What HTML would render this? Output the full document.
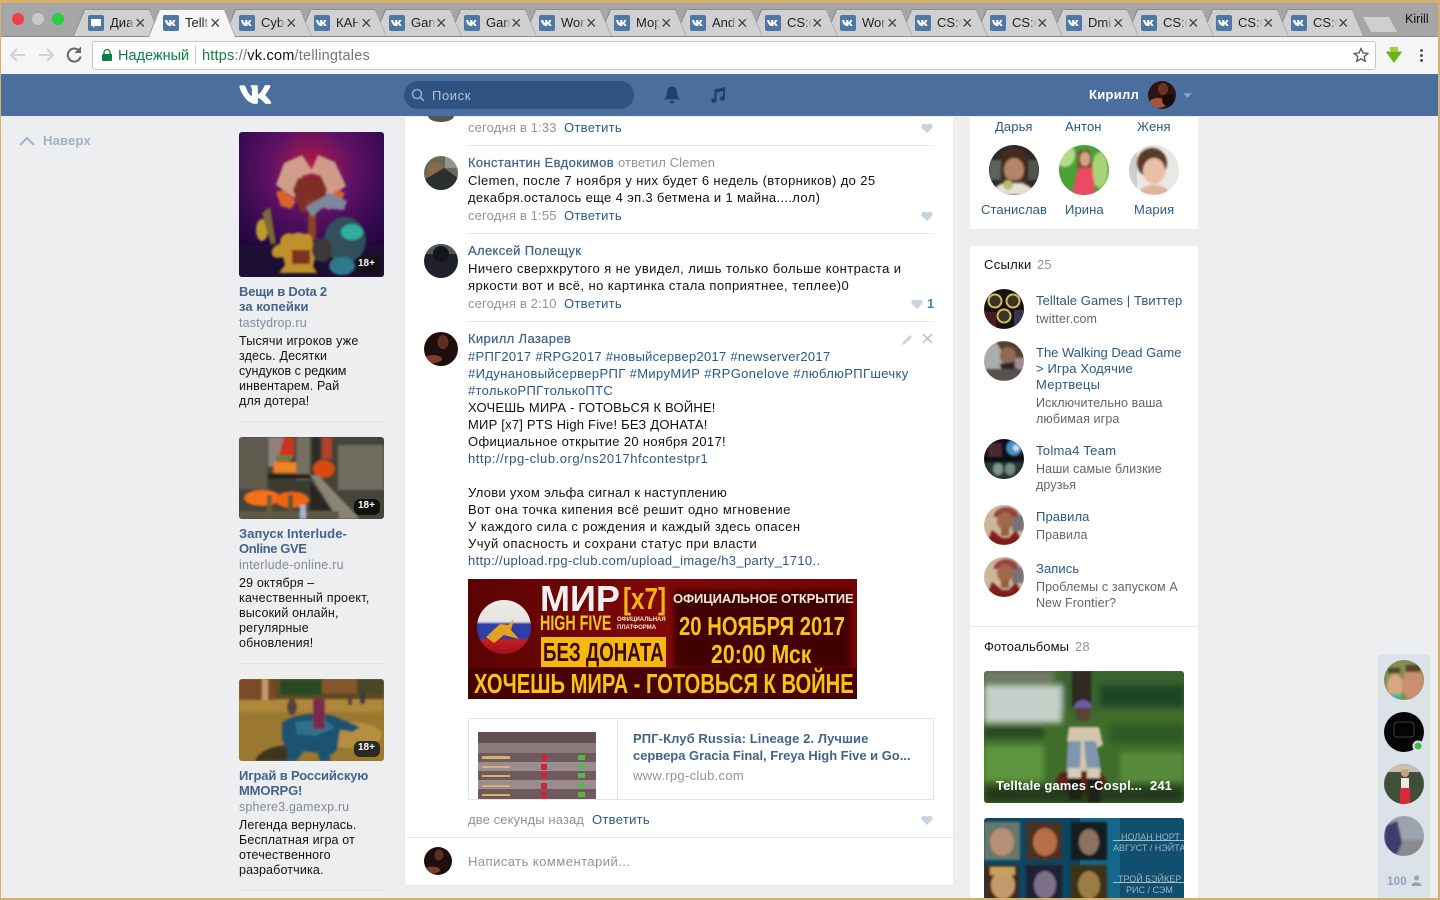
<!DOCTYPE html>
<html lang="ru"><head><meta charset="utf-8"><title>Telltale</title>
<style>
html,body{margin:0;padding:0;width:1440px;height:900px;overflow:hidden;background:#edeef0}
body{position:relative;font-family:"Liberation Sans","Noto Sans CJK SC",sans-serif;font-size:13px;color:#000}
.a{position:absolute}
.t{position:absolute;white-space:nowrap;line-height:16px;font-size:13px;letter-spacing:.3px;z-index:3;color:#111}
.l{color:#2a5885}.g{color:#939393}.m{color:#656565;font-size:12.500px;letter-spacing:.12px}.b{font-weight:bold;color:#42648b;letter-spacing:.25px}
.n{color:#42648b;-webkit-text-stroke:.25px #42648b;letter-spacing:.35px}
.ab{font-size:12.500px;letter-spacing:.15px}
.card{position:absolute;background:#fff;box-shadow:inset 0 0 0 1px #e9eaed}
.hr{position:absolute;height:1px;background:#e7e8ec;z-index:2}
.tab{position:absolute;top:9px;width:88px;height:28px;background:#8e8e8e;clip-path:polygon(0 100%,11px 0,76px 0,100% 100%)}
.tab:before{content:"";position:absolute;left:1px;top:1px;right:1px;bottom:1px;background:#d0d0d0;clip-path:polygon(0 100%,11px 0,75px 0,100% 100%)}
.tab.on{background:#a0a0a0;height:28px}.tab.on:before{background:#f5f5f5;bottom:0}
.fv{position:absolute;left:15px;top:6px;width:16px;height:16px;border-radius:2px;background:#4f77a6}
.fv svg{display:block}
.tt{position:absolute;left:37px;top:6px;width:25px;overflow:hidden;font-size:13px;line-height:16px;white-space:nowrap;color:#222;-webkit-mask-image:linear-gradient(90deg,#000 72%,transparent 96%);mask-image:linear-gradient(90deg,#000 72%,transparent 96%)}
.x{position:absolute;left:62px;top:5px;font-size:18px;line-height:18px;color:#444}
</style></head><body>

<!-- chrome -->
<div class="a" style="left:0;top:0;width:1440px;height:37px;background:#a6a6a6"></div>
<div class="a" style="left:0;top:37px;width:1440px;height:37px;background:#f5f5f5"></div>
<div class="a" style="left:0;top:0;width:1440px;height:3px;background:#d5b26c;z-index:9"></div>
<div class="a" style="left:0;top:0;width:1px;height:900px;background:#d5b26c;z-index:9"></div>
<div class="a" style="left:1438px;top:0;width:2px;height:900px;background:#d5b26c;z-index:9"></div>
<div class="a" style="left:0;top:898px;width:1440px;height:2px;background:#d5b26c;z-index:9"></div>
<div class="a" style="left:12px;top:13px;width:12px;height:12px;border-radius:50%;background:#f0404a"></div>
<div class="a" style="left:32px;top:13px;width:12px;height:12px;border-radius:50%;background:#c9c9c9"></div>
<div class="a" style="left:52px;top:13px;width:12px;height:12px;border-radius:50%;background:#28cd41"></div>

<div class="tab" style="left:1276px"><div class="fv"><svg width="16" height="16"><path fill="#fff" d="M2 5h2.200c.5 2 1.500 3.200 2 3.200V5h2.200v2.600c.7-.3 1.500-1.500 1.800-2.600h2.200c-.3 1.200-1.300 2.500-2 3.100.8.600 1.900 1.700 2.300 2.900h-2.300c-.4-1-1.200-1.800-2-2V11H7C4.500 11 2.500 8.500 2 5z"/></svg></div><div class="tt">CS:GO</div><div class="x">×</div></div>
<div class="tab" style="left:1201px"><div class="fv"><svg width="16" height="16"><path fill="#fff" d="M2 5h2.200c.5 2 1.500 3.200 2 3.200V5h2.200v2.600c.7-.3 1.500-1.500 1.800-2.600h2.200c-.3 1.200-1.300 2.500-2 3.100.8.600 1.900 1.700 2.300 2.900h-2.300c-.4-1-1.200-1.800-2-2V11H7C4.500 11 2.500 8.500 2 5z"/></svg></div><div class="tt">CS:GO</div><div class="x">×</div></div>
<div class="tab" style="left:1126px"><div class="fv"><svg width="16" height="16"><path fill="#fff" d="M2 5h2.200c.5 2 1.500 3.200 2 3.200V5h2.200v2.600c.7-.3 1.500-1.500 1.800-2.600h2.200c-.3 1.200-1.300 2.500-2 3.100.8.600 1.900 1.700 2.300 2.900h-2.300c-.4-1-1.200-1.800-2-2V11H7C4.500 11 2.500 8.500 2 5z"/></svg></div><div class="tt">CS:GO</div><div class="x">×</div></div>
<div class="tab" style="left:1051px"><div class="fv"><svg width="16" height="16"><path fill="#fff" d="M2 5h2.200c.5 2 1.500 3.200 2 3.200V5h2.200v2.600c.7-.3 1.500-1.500 1.800-2.600h2.200c-.3 1.200-1.300 2.500-2 3.100.8.600 1.900 1.700 2.300 2.900h-2.300c-.4-1-1.200-1.800-2-2V11H7C4.500 11 2.500 8.500 2 5z"/></svg></div><div class="tt">Dmi</div><div class="x">×</div></div>
<div class="tab" style="left:975px"><div class="fv"><svg width="16" height="16"><path fill="#fff" d="M2 5h2.200c.5 2 1.500 3.200 2 3.200V5h2.200v2.600c.7-.3 1.500-1.500 1.800-2.600h2.200c-.3 1.200-1.300 2.500-2 3.100.8.600 1.900 1.700 2.300 2.900h-2.300c-.4-1-1.200-1.800-2-2V11H7C4.500 11 2.500 8.500 2 5z"/></svg></div><div class="tt">CS:GO</div><div class="x">×</div></div>
<div class="tab" style="left:900px"><div class="fv"><svg width="16" height="16"><path fill="#fff" d="M2 5h2.200c.5 2 1.500 3.200 2 3.200V5h2.200v2.600c.7-.3 1.500-1.500 1.800-2.600h2.200c-.3 1.200-1.300 2.500-2 3.100.8.600 1.900 1.700 2.300 2.900h-2.300c-.4-1-1.200-1.800-2-2V11H7C4.500 11 2.500 8.500 2 5z"/></svg></div><div class="tt">CS:GO</div><div class="x">×</div></div>
<div class="tab" style="left:825px"><div class="fv"><svg width="16" height="16"><path fill="#fff" d="M2 5h2.200c.5 2 1.500 3.200 2 3.200V5h2.200v2.600c.7-.3 1.500-1.500 1.800-2.600h2.200c-.3 1.200-1.300 2.500-2 3.100.8.600 1.900 1.700 2.300 2.900h-2.300c-.4-1-1.200-1.800-2-2V11H7C4.500 11 2.500 8.500 2 5z"/></svg></div><div class="tt">Wor</div><div class="x">×</div></div>
<div class="tab" style="left:750px"><div class="fv"><svg width="16" height="16"><path fill="#fff" d="M2 5h2.200c.5 2 1.500 3.200 2 3.200V5h2.200v2.600c.7-.3 1.500-1.500 1.800-2.600h2.200c-.3 1.200-1.300 2.500-2 3.100.8.600 1.900 1.700 2.300 2.900h-2.300c-.4-1-1.200-1.800-2-2V11H7C4.500 11 2.500 8.500 2 5z"/></svg></div><div class="tt">CS:GO</div><div class="x">×</div></div>
<div class="tab" style="left:675px"><div class="fv"><svg width="16" height="16"><path fill="#fff" d="M2 5h2.200c.5 2 1.500 3.200 2 3.200V5h2.200v2.600c.7-.3 1.500-1.500 1.800-2.600h2.200c-.3 1.200-1.300 2.500-2 3.100.8.600 1.900 1.700 2.300 2.900h-2.300c-.4-1-1.200-1.800-2-2V11H7C4.500 11 2.500 8.500 2 5z"/></svg></div><div class="tt">And</div><div class="x">×</div></div>
<div class="tab" style="left:599px"><div class="fv"><svg width="16" height="16"><path fill="#fff" d="M2 5h2.200c.5 2 1.500 3.200 2 3.200V5h2.200v2.600c.7-.3 1.500-1.500 1.800-2.600h2.200c-.3 1.200-1.300 2.500-2 3.100.8.600 1.900 1.700 2.300 2.900h-2.300c-.4-1-1.200-1.800-2-2V11H7C4.500 11 2.500 8.500 2 5z"/></svg></div><div class="tt">Мор</div><div class="x">×</div></div>
<div class="tab" style="left:524px"><div class="fv"><svg width="16" height="16"><path fill="#fff" d="M2 5h2.200c.5 2 1.500 3.200 2 3.200V5h2.200v2.600c.7-.3 1.500-1.500 1.800-2.600h2.200c-.3 1.200-1.300 2.500-2 3.100.8.600 1.900 1.700 2.300 2.900h-2.300c-.4-1-1.200-1.800-2-2V11H7C4.500 11 2.500 8.500 2 5z"/></svg></div><div class="tt">Wor</div><div class="x">×</div></div>
<div class="tab" style="left:449px"><div class="fv"><svg width="16" height="16"><path fill="#fff" d="M2 5h2.200c.5 2 1.500 3.200 2 3.200V5h2.200v2.600c.7-.3 1.500-1.500 1.800-2.600h2.200c-.3 1.200-1.300 2.500-2 3.100.8.600 1.900 1.700 2.300 2.900h-2.300c-.4-1-1.200-1.800-2-2V11H7C4.500 11 2.500 8.500 2 5z"/></svg></div><div class="tt">Gam</div><div class="x">×</div></div>
<div class="tab" style="left:374px"><div class="fv"><svg width="16" height="16"><path fill="#fff" d="M2 5h2.200c.5 2 1.500 3.200 2 3.200V5h2.200v2.600c.7-.3 1.500-1.500 1.800-2.600h2.200c-.3 1.200-1.300 2.500-2 3.100.8.600 1.900 1.700 2.300 2.900h-2.300c-.4-1-1.200-1.800-2-2V11H7C4.500 11 2.500 8.500 2 5z"/></svg></div><div class="tt">Gam</div><div class="x">×</div></div>
<div class="tab" style="left:299px"><div class="fv"><svg width="16" height="16"><path fill="#fff" d="M2 5h2.200c.5 2 1.500 3.200 2 3.200V5h2.200v2.600c.7-.3 1.500-1.500 1.800-2.600h2.200c-.3 1.200-1.300 2.500-2 3.100.8.600 1.900 1.700 2.300 2.900h-2.300c-.4-1-1.200-1.800-2-2V11H7C4.500 11 2.500 8.500 2 5z"/></svg></div><div class="tt">КАН</div><div class="x">×</div></div>
<div class="tab" style="left:224px"><div class="fv"><svg width="16" height="16"><path fill="#fff" d="M2 5h2.200c.5 2 1.500 3.200 2 3.200V5h2.200v2.600c.7-.3 1.500-1.500 1.800-2.600h2.200c-.3 1.200-1.300 2.500-2 3.100.8.600 1.900 1.700 2.300 2.900h-2.300c-.4-1-1.200-1.800-2-2V11H7C4.500 11 2.500 8.500 2 5z"/></svg></div><div class="tt">Cyb</div><div class="x">×</div></div>
<div class="tab" style="left:73px"><div class="fv"><svg width="16" height="16"><path fill="#fff" d="M3 4h10v7H7l-2 2v-2H3z"/></svg></div><div class="tt">Диа</div><div class="x">×</div></div>
<div class="a" style="left:0;top:36px;width:1440px;height:1px;background:#8e8e8e"></div>
<div class="tab on" style="left:148px"><div class="fv"><svg width="16" height="16"><path fill="#fff" d="M2 5h2.200c.5 2 1.500 3.200 2 3.200V5h2.200v2.600c.7-.3 1.500-1.500 1.800-2.600h2.200c-.3 1.200-1.300 2.500-2 3.100.8.600 1.900 1.700 2.300 2.900h-2.300c-.4-1-1.200-1.800-2-2V11H7C4.500 11 2.500 8.500 2 5z"/></svg></div><div class="tt">Tellt</div><div class="x">×</div></div>
<div class="a" style="left:1363px;top:17px;width:34px;height:15px;background:#cfcfcf;clip-path:polygon(0 0,26px 0,100% 100%,8px 100%)"></div>
<div class="t" style="left:1405px;top:11px;letter-spacing:0;font-size:12.500px;color:#111">Kirill</div>

<svg class="a" style="left:0;top:37px" width="100" height="36" fill="none">
<path d="M25 18H11M17 12l-6 6 6 6" stroke="#d2d2d2" stroke-width="2"/>
<path d="M39 18h14M47 12l6 6-6 6" stroke="#d2d2d2" stroke-width="2"/>
<path d="M80 15a6.500 6.500 0 1 0 .6 4.500" stroke="#666" stroke-width="2"/><path d="M81 9.500v6.500h-6.500z" fill="#666"/>
</svg>
<div class="a" style="left:92px;top:41px;width:1282px;height:27px;background:#fff;border:1px solid #c8c8c8;border-radius:3px"></div>
<svg class="a" style="left:102px;top:49px" width="10" height="12"><path d="M2 5V3.500a3 3 0 0 1 6 0V5" fill="none" stroke="#0b8043" stroke-width="1.300"/><rect y="5" width="10" height="7" rx="1" fill="#0b8043"/></svg>
<div class="t" style="left:118px;top:48px;font-size:14.500px;letter-spacing:0;color:#0b8043">Надежный</div>
<div class="a" style="left:195px;top:46px;width:1px;height:18px;background:#c8c8c8"></div>
<div class="t" style="left:202px;top:48px;font-size:14.500px;letter-spacing:.22px;color:#767676"><span style="color:#0b8043">https</span>://<span style="color:#111">vk.com</span>/tellingtales</div>
<svg class="a" style="left:1353px;top:47px" width="16" height="16"><path d="M8 1.500l2 4.500 4.800.4-3.600 3.200 1.100 4.700L8 11.800l-4.300 2.500 1.100-4.700L1.200 6.400 6 6z" fill="none" stroke="#555" stroke-width="1.300"/></svg>
<svg class="a" style="left:1385px;top:46px" width="18" height="18"><path d="M1 6c2-1 3-1 4 0V1h8v5c1-1 2-1 4 0l-8 11z" fill="#6fb11f"/><path d="M5 1h8v5H5z" fill="#9ad13c"/></svg>
<div class="a" style="left:1420px;top:49px;width:3px;height:3px;border-radius:50%;background:#555;box-shadow:0 5px 0 #555,0 10px 0 #555"></div>

<!-- VK header -->
<div class="a" style="left:0;top:74px;width:1440px;height:42px;background:#4a6f9e;z-index:5"></div>
<svg class="a" style="left:239px;top:85px;z-index:6" width="33" height="19" viewBox="5.200 8.200 13.900 8.100" preserveAspectRatio="none"><path fill="#fff" d="M18.150 16.270h-1.460c-.55 0-.72-.44-1.710-1.440-.86-.83-1.240-.94-1.450-.94-.3 0-.38.08-.38.49v1.310c0 .35-.11.56-1.040.56-1.540 0-3.240-.93-4.440-2.660-1.800-2.530-2.300-4.430-2.300-4.820 0-.21.08-.41.49-.41h1.460c.37 0 .51.17.65.57.71 2.070 1.910 3.880 2.400 3.880.19 0 .27-.08.27-.56V10.100c-.06-1.020-.6-1.110-.6-1.470 0-.18.14-.35.38-.35h2.300c.31 0 .42.17.42.53v2.890c0 .31.14.42.23.42.18 0 .34-.11.68-.45 1.060-1.180 1.810-3.010 1.810-3.010.1-.21.27-.41.64-.41h1.460c.44 0 .53.22.44.53-.18.85-1.960 3.360-1.960 3.360-.16.25-.22.37 0 .65.16.21.68.66 1.030 1.060.64.72 1.130 1.330 1.270 1.750.12.42-.1.630-.52.630z"/></svg>
<div class="a" style="left:404px;top:81px;width:230px;height:28px;border-radius:14px;background:#2f5380;z-index:6"></div>
<svg class="a" style="left:411px;top:88px;z-index:7" width="14" height="14" fill="none" stroke="#93a9c4" stroke-width="1.600"><circle cx="6" cy="6" r="4.500"/><path d="M9.500 9.500l3.500 3.500"/></svg>
<div class="t" style="left:432px;top:88px;color:#b4c3d6;z-index:7;letter-spacing:.6px">Поиск</div>
<svg class="a" style="left:663px;top:85px;z-index:7" width="18" height="20"><path fill="#20406a" d="M9 1.500c-3.300 0-5 2.500-5 5.500 0 3.500-1 5-2.500 6.500v1h15v-1C15 12 14 10.500 14 7c0-3-1.700-5.500-5-5.500z"/><path fill="#20406a" d="M6.500 16h5a2.500 2.500 0 0 1-5 0z"/></svg>
<svg class="a" style="left:709px;top:86px;z-index:7" width="18" height="18"><path fill="#20406a" d="M5.500 3.500L16 1v11.500a2.600 2.300 0 1 1-2-2.200V5L7.500 6.500v8a2.600 2.300 0 1 1-2-2.200z"/></svg>
<div class="t" style="left:1089px;top:87px;color:#fff;font-weight:bold;z-index:7">Кирилл</div>
<svg class="a" style="left:1148px;top:81px;z-index:7" width="28" height="28"><defs><clipPath id="cu"><circle cx="14" cy="14" r="14"/></clipPath></defs><g clip-path="url(#cu)"><rect width="28" height="28" fill="#2a1512"/><ellipse cx="15" cy="8" rx="5" ry="6" fill="#6b3322"/><ellipse cx="10" cy="22" rx="9" ry="5" fill="#a4553a"/><ellipse cx="20" cy="19" rx="6" ry="6" fill="#160c0a"/></g></svg>
<svg class="a" style="left:1183px;top:93px;z-index:7" width="9" height="5"><path d="M0 0h9L4.500 5z" fill="#86a0c0"/></svg>

<!-- Sidebar up -->
<svg class="a" style="left:19px;top:136px" width="16" height="10" fill="none"><path d="M1 9l7-7 7 7" stroke="#a5b4c6" stroke-width="2"/></svg>
<div class="t" style="left:43px;top:133px;font-weight:bold;color:#9fb0c3;letter-spacing:.2px">Наверх</div>

<!-- Cards -->
<div class="card" style="left:404px;top:116px;width:550px;height:770px"></div>
<div class="card" style="left:969px;top:116px;width:230px;height:114px"></div>
<div class="card" style="left:969px;top:245px;width:230px;height:660px"></div>
<div class="a" style="left:1378px;top:654px;width:52px;height:246px;background:#dbe2ea;border-radius:4px 4px 0 0"></div>

<!-- all artwork -->
<svg class="a" style="left:0;top:0;z-index:2" width="1440" height="900">
<defs>
<filter id="b1" x="-20%" y="-20%" width="140%" height="140%"><feGaussianBlur stdDeviation="1"/></filter>
<filter id="b2" x="-30%" y="-30%" width="160%" height="160%"><feGaussianBlur stdDeviation="2"/></filter>
<filter id="b3" x="-30%" y="-30%" width="160%" height="160%"><feGaussianBlur stdDeviation="3"/></filter>
<radialGradient id="pur" cx=".5" cy=".25" r=".7"><stop offset="0" stop-color="#b31b3f"/><stop offset=".4" stop-color="#611266"/><stop offset=".8" stop-color="#33094f"/><stop offset="1" stop-color="#220740"/></radialGradient>
<linearGradient id="ban" x1="0" x2="1" y1="0" y2="0"><stop offset="0" stop-color="#5a0303"/><stop offset=".5" stop-color="#800808"/><stop offset="1" stop-color="#740505"/></linearGradient>
<linearGradient id="glo" x1="0" x2="0" y1="0" y2="1"><stop offset="0" stop-color="#efece6"/><stop offset=".4" stop-color="#e5e3e0"/><stop offset=".45" stop-color="#2d3fa5"/><stop offset=".7" stop-color="#2d3fa5"/><stop offset=".75" stop-color="#c51d22"/><stop offset="1" stop-color="#9e1016"/></linearGradient>
<clipPath id="ca1"><rect x="239" y="132" width="145" height="145" rx="3"/></clipPath>
<clipPath id="ca2"><rect x="239" y="437" width="145" height="82" rx="3"/></clipPath>
<clipPath id="ca3"><rect x="239" y="679" width="145" height="82" rx="3"/></clipPath>
<clipPath id="ph1"><rect x="984" y="671" width="200" height="132" rx="3"/></clipPath>
<clipPath id="ph2"><rect x="984" y="818" width="200" height="82" rx="3"/></clipPath>
<clipPath id="c0"><circle cx="441" cy="173" r="17"/></clipPath>
<clipPath id="c1"><circle cx="441" cy="261" r="17"/></clipPath>
<clipPath id="c2"><circle cx="441" cy="349" r="17"/></clipPath>
<clipPath id="c3"><circle cx="438" cy="861" r="14"/></clipPath>
<clipPath id="f1"><circle cx="1014" cy="170" r="25"/></clipPath>
<clipPath id="f2"><circle cx="1084" cy="170" r="25"/></clipPath>
<clipPath id="f3"><circle cx="1154" cy="170" r="25"/></clipPath>
<clipPath id="l1"><circle cx="1004" cy="309" r="20"/></clipPath>
<clipPath id="l2"><circle cx="1004" cy="361" r="20"/></clipPath>
<clipPath id="l3"><circle cx="1004" cy="459" r="20"/></clipPath>
<clipPath id="l4"><circle cx="1004" cy="525" r="20"/></clipPath>
<clipPath id="l5"><circle cx="1004" cy="577" r="20"/></clipPath>
<clipPath id="s1"><circle cx="1404" cy="680" r="20"/></clipPath>
<clipPath id="s3"><circle cx="1404" cy="784" r="20"/></clipPath>
<clipPath id="s4"><circle cx="1404" cy="836" r="20"/></clipPath>
</defs>

<path d="M428 116h26a13 6 0 0 1-26 0z" fill="#555"/>

<!-- Ad 1 -->
<g clip-path="url(#ca1)">
<rect x="239" y="132" width="145" height="145" fill="url(#pur)"/>
<rect x="239" y="245" width="145" height="32" fill="#1c0a33" filter="url(#b3)"/>
<g filter="url(#b1)">
<path d="M302 155l-18 8-8 22 18 13 7-8 1-14 12-3z" fill="#cf9d8a"/>
<path d="M318 155l17 7 11 24-17 12-7-9-1-13-11-3z" fill="#cf9a86"/>
<path d="M298 178h24l5 12-8 22h-18l-8-22z" fill="#7f2e28"/>
<path d="M283 190l-7 2 5 14 10 3 5-8z" fill="#d9642a"/><path d="M337 190l8 3-6 13-11 4-4-9z" fill="#d9642a"/>
<rect x="308" y="200" width="8" height="40" fill="#8a3f20"/>
<path d="M280 244c0-10 8-12 12-10 6-2 8-2 12 0 5-2 9 2 9 10 6-2 10-4 11 0 2 5-2 10-8 10l-3 12 4 7h-38l6-8-2-8c-8 2-12 0-11-6 1-5 4-5 7-7z" fill="#c0902a"/>
<rect x="292" y="250" width="18" height="14" fill="#7c321e"/>
<ellipse cx="262" cy="230" rx="6" ry="11" fill="#bf9a2f"/>
<path d="M262 213l8-6 6 36-5 2z" fill="#7b6730"/>
<path d="M306 207l24-14 17 8-3 9-22-2-10 9z" fill="#7f86a0"/>
<ellipse cx="345" cy="240" rx="21" ry="23" fill="#33505b"/>
<ellipse cx="322" cy="250" rx="10" ry="12" fill="#3a3838"/>
<ellipse cx="352" cy="232" rx="11" ry="8" fill="#2fae9c"/>
<ellipse cx="342" cy="266" rx="13" ry="9" fill="#2f7a8c"/>
</g>
<rect x="357" y="257" width="24" height="16" rx="4" fill="#111"/>
</g>

<!-- Ad 2 -->
<g clip-path="url(#ca2)">
<rect x="239" y="437" width="145" height="82" fill="#46433a"/>
<g filter="url(#b1)">
<rect x="239" y="437" width="28" height="52" fill="#5f5b50"/>
<rect x="268" y="437" width="16" height="30" fill="#8d807d"/>
<rect x="296" y="437" width="14" height="55" fill="#75705f"/>
<rect x="338" y="445" width="46" height="45" fill="#6e6d60"/>
<rect x="312" y="437" width="8" height="38" fill="#2c2f27"/>
<rect x="268" y="474" width="44" height="5" fill="#24221c"/>
<rect x="270" y="480" width="40" height="14" fill="#3a3a30"/>
<path d="M284 437h10v20l-18 15h-5l7-14z" fill="#c9351b"/>
<path d="M274 462h22v11h-22z" fill="#ee8324"/>
<rect x="276" y="456" width="16" height="4" fill="#2f8a50"/>
<rect x="322" y="437" width="10" height="22" fill="#b5402f"/>
<ellipse cx="324" cy="469" rx="11" ry="9" fill="#d8490f"/>
<ellipse cx="262" cy="498" rx="18" ry="8" fill="#f56f12"/>
<ellipse cx="292" cy="500" rx="17" ry="8" fill="#ef6510"/>
<path d="M310 475l8 0 42 44h-22z" fill="#8a8474"/>
<path d="M310 480l28 39h-28z" fill="#2a2822"/>
<rect x="239" y="511" width="100" height="8" fill="#5e5a46"/>
<rect x="267" y="495" width="5" height="20" fill="#6a5d35"/>
<rect x="288" y="495" width="5" height="18" fill="#5f5431"/>
<rect x="300" y="505" width="6" height="14" fill="#aab4cc"/>
</g>
<rect x="354" y="499" width="26" height="16" rx="6" fill="#111"/>
</g>

<!-- Ad 3 -->
<g clip-path="url(#ca3)">
<rect x="239" y="679" width="145" height="82" fill="#9a7830"/>
<g filter="url(#b1)">
<rect x="239" y="679" width="145" height="20" fill="#5a4c28"/>
<path d="M239 679h33l5 24h-38z" fill="#7e4a28"/>
<rect x="262" y="679" width="6" height="24" fill="#c69a6a"/>
<rect x="280" y="679" width="42" height="16" fill="#2a4a24"/>
<rect x="322" y="679" width="35" height="14" fill="#86542c"/>
<rect x="357" y="679" width="27" height="14" fill="#46462a"/>
<rect x="239" y="700" width="145" height="12" fill="#ae873a"/>
<path d="M255 761c4-10 18-16 36-16l12 8-10 8z" fill="#3f351b"/>
<ellipse cx="352" cy="735" rx="30" ry="13" fill="#b48f40"/>
<path d="M282 723c10-10 42-12 54-6l24 10-7 5-13-2-3 20-8 6 2 5h-11l-2-8-14-2-8 10h-10l2-10-6-12z" fill="#1f5270"/>
<path d="M295 722l30-2 10 8-20 8-18-2z" fill="#2f708c"/>
<rect x="313" y="699" width="12" height="30" fill="#7a2c4e"/>
<ellipse cx="292" cy="707" rx="5" ry="8" fill="#54433a"/>
<rect x="348" y="695" width="4" height="10" fill="#5a3a3a"/>
<rect x="360" y="692" width="5" height="12" fill="#3c3a34"/>
</g>
<rect x="354" y="741" width="26" height="16" rx="6" fill="#2b2a22"/>
</g>

<!-- banner -->
<rect x="468" y="579" width="389" height="120" fill="url(#ban)"/>
<rect x="674" y="590" width="176" height="78" fill="#3f0404" filter="url(#b3)"/>
<rect x="468" y="668" width="389" height="31" fill="#470303"/>
<circle cx="504" cy="627" r="27" fill="url(#glo)"/>
<path d="M486 637l14-13 8 1 6-6-3 11 8 9-15-4-10 8z" fill="#e3a21f"/>
<rect x="541" y="637" width="125" height="30" fill="#f5b80d"/>

<!-- link snippet thumb -->
<rect x="478" y="732" width="118" height="67" fill="#6f5a5e"/>
<rect x="478" y="732" width="118" height="11" fill="#645053"/>
<rect x="478" y="743" width="118" height="10" fill="#8b7a7c"/>
<rect x="478" y="762" width="118" height="9" fill="#9a8c90"/>
<rect x="478" y="780" width="118" height="9" fill="#9a8c90"/>
<rect x="482" y="756" width="28" height="3" fill="#d5b266"/><rect x="482" y="766" width="28" height="2" fill="#d5b266"/><rect x="482" y="775" width="28" height="2" fill="#d5b266"/><rect x="482" y="785" width="28" height="2" fill="#d5b266"/><rect x="482" y="794" width="28" height="2" fill="#d5b266"/>
<g fill="#d3213a"><rect x="541" y="755" width="6" height="6"/><rect x="541" y="764" width="6" height="6"/><rect x="541" y="773" width="6" height="6"/><rect x="541" y="783" width="6" height="6"/><rect x="541" y="792" width="6" height="6"/></g>
<g fill="#52b84a"><rect x="578" y="755" width="7" height="5"/><rect x="578" y="764" width="7" height="5"/><rect x="578" y="773" width="7" height="5"/><rect x="578" y="783" width="7" height="5"/><rect x="578" y="792" width="7" height="5"/></g>

<!-- post avatars -->
<g clip-path="url(#c0)"><rect x="424" y="156" width="34" height="34" fill="#6a6a58"/><rect x="445" y="156" width="13" height="12" fill="#8f968c"/><ellipse cx="436" cy="171" rx="8" ry="9" fill="#8a6a4a"/><path d="M424 180l20-12 14 10v12h-34z" fill="#2a302c"/></g>
<g clip-path="url(#c1)"><rect x="424" y="244" width="34" height="34" fill="#1f2128"/><rect x="424" y="244" width="34" height="10" fill="#4f5753"/><ellipse cx="441" cy="254" rx="8" ry="8" fill="#15151c"/></g>
<g clip-path="url(#c2)"><rect x="424" y="332" width="34" height="34" fill="#1d0f0d"/><ellipse cx="443" cy="342" rx="5.500" ry="7" fill="#5f3020"/><ellipse cx="433" cy="359" rx="9" ry="4" fill="#7c3e2c"/></g>
<g clip-path="url(#c3)"><rect x="424" y="847" width="28" height="28" fill="#1d0f0d"/><ellipse cx="439" cy="855" rx="4.500" ry="5.500" fill="#5f3020"/><ellipse cx="432" cy="870" rx="8" ry="3.500" fill="#7c3e2c"/></g>

<!-- friends -->
<g clip-path="url(#f1)"><rect x="989" y="145" width="50" height="50" fill="#2e2a28"/><g filter="url(#b1)"><rect x="989" y="160" width="12" height="20" fill="#5c6258"/><rect x="1028" y="160" width="11" height="20" fill="#50564e"/><ellipse cx="1014" cy="163" rx="13" ry="15" fill="#4a2c1c"/><ellipse cx="1014" cy="170" rx="10" ry="12" fill="#b5846a"/><path d="M1003 172c3 11 19 11 22 0l1 10h-24z" fill="#4d2c1c"/><path d="M992 195c2-10 10-12 14-12h16c6 2 12 6 14 12z" fill="#e5dfd6"/><circle cx="1008" cy="185" r="5" fill="#bcbc70"/></g></g>
<g clip-path="url(#f2)"><rect x="1059" y="145" width="50" height="50" fill="#4aa234"/><g filter="url(#b1)"><ellipse cx="1065" cy="155" rx="10" ry="12" fill="#b2dc8a"/><ellipse cx="1100" cy="170" rx="8" ry="18" fill="#a6d478"/><path d="M1078 150h12l3 22h-16z" fill="#7c5230"/><ellipse cx="1085" cy="159" rx="5" ry="7" fill="#d8a385"/><path d="M1078 168h14l4 27h-24z" fill="#ee4a64"/></g></g>
<g clip-path="url(#f3)"><rect x="1129" y="145" width="50" height="50" fill="#e9e8e4"/><rect x="1129" y="145" width="8" height="50" fill="#cdd0ca"/><g filter="url(#b1)"><ellipse cx="1152" cy="163" rx="15" ry="15" fill="#5a3a26"/><ellipse cx="1154" cy="171" rx="11" ry="13" fill="#e9c0a6"/><path d="M1138 195c2-8 10-10 16-10s14 2 16 10z" fill="#e0b49c"/></g></g>

<!-- links -->
<g clip-path="url(#l1)"><rect x="984" y="289" width="40" height="40" fill="#1a1014"/><rect x="984" y="312" width="12" height="17" fill="#4a1a22"/><rect x="1014" y="310" width="10" height="19" fill="#3a3450"/><g fill="#3a3420" stroke="#cdbf6a" stroke-width="2"><circle cx="995" cy="301" r="6.500"/><circle cx="1013" cy="301" r="6.500"/><circle cx="1004" cy="316" r="6.500"/></g></g>
<g clip-path="url(#l2)"><rect x="984" y="341" width="40" height="40" fill="#a9adab"/><g filter="url(#b1)"><path d="M996 341h28v20l-15 3z" fill="#53402f"/><ellipse cx="1008" cy="356" rx="8" ry="9" fill="#8e6a52"/><path d="M1000 364l20-3-4 12-12 3z" fill="#2e2420"/><rect x="984" y="369" width="40" height="12" fill="#55514f"/><rect x="1015" y="358" width="9" height="10" fill="#a88a92"/></g></g>
<g clip-path="url(#l3)"><rect x="984" y="439" width="40" height="40" fill="#0d0f14"/><g filter="url(#b1)"><rect x="988" y="443" width="14" height="14" fill="#4a2c30"/><circle cx="1014" cy="448" r="8" fill="#4090c8"/><circle cx="1016" cy="448" r="3" fill="#dfe4e4"/><rect x="984" y="462" width="40" height="17" fill="#28373a"/><ellipse cx="998" cy="469" rx="5" ry="6" fill="#7f9a86"/><ellipse cx="1010" cy="469" rx="5" ry="6" fill="#758c80"/></g></g>
<g clip-path="url(#l4)"><rect x="984" y="505" width="40" height="40" fill="#cdb79c"/><g filter="url(#b1)"><rect x="1012" y="515" width="12" height="16" fill="#76737a"/><path d="M994 514c5-9 20-9 24 0v3h-24z" fill="#96403f"/><ellipse cx="1005" cy="521" rx="8" ry="9" fill="#a06a48"/><rect x="1001" y="528" width="8" height="8" fill="#94603f"/><path d="M986 546l6-16 10 8h7l7-8 8 16z" fill="#7f1d1d"/></g></g>
<g clip-path="url(#l5)"><rect x="984" y="557" width="40" height="40" fill="#cdb79c"/><g filter="url(#b1)"><rect x="1012" y="567" width="12" height="16" fill="#76737a"/><path d="M994 566c5-9 20-9 24 0v3h-24z" fill="#96403f"/><ellipse cx="1005" cy="573" rx="8" ry="9" fill="#a06a48"/><rect x="1001" y="580" width="8" height="8" fill="#94603f"/><path d="M986 598l6-16 10 8h7l7-8 8 16z" fill="#7f1d1d"/></g></g>

<!-- album 1 -->
<g clip-path="url(#ph1)">
<rect x="984" y="671" width="200" height="132" fill="#3f6d2a"/>
<g filter="url(#b3)">
<rect x="1060" y="671" width="130" height="40" fill="#38622f"/>
<rect x="984" y="671" width="70" height="12" fill="#73796a"/>
<rect x="984" y="685" width="78" height="38" fill="#c3cfc8"/>
<rect x="1100" y="685" width="84" height="22" fill="#1f4727"/>
<rect x="984" y="726" width="60" height="12" fill="#2b4a20"/>
<rect x="1110" y="725" width="74" height="18" fill="#2f5a26"/>
<rect x="984" y="745" width="60" height="36" fill="#5e9540"/>
<rect x="1120" y="752" width="64" height="30" fill="#588a3a"/>
</g>
<g filter="url(#b1)">
<rect x="1072" y="671" width="19" height="36" fill="#2d2a21"/>
<ellipse cx="1083" cy="712" rx="8" ry="10" fill="#5b4336"/>
<path d="M1074 708a9 8 0 0 1 18 0z" fill="#6b5ba8"/>
<path d="M1069 727h30l4 18-8 4-2 22h-22l1-22-5-8z" fill="#d5c5ae"/>
<path d="M1068 741h13l-1 34h-14zM1084 741h12l6 34h-15z" fill="#7f97ae"/>
<path d="M1061 772l40 0 6 10-10 12h-30l-12-12z" fill="#5c2018"/>
<rect x="1068" y="768" width="13" height="10" fill="#d8cdb4"/><rect x="1087" y="768" width="13" height="10" fill="#d8cdb4"/>
<rect x="1069" y="778" width="12" height="22" fill="#1d1a15"/><rect x="1088" y="778" width="12" height="24" fill="#1d1a15"/>
</g>
<rect x="984" y="786" width="200" height="17" fill="#1a2812" opacity=".7" filter="url(#b3)"/>
</g>

<!-- album 2 -->
<g clip-path="url(#ph2)">
<rect x="984" y="818" width="200" height="82" fill="#0b4763"/>
<rect x="1080" y="818" width="40" height="82" fill="#15688c"/>
<rect x="1120" y="818" width="64" height="82" fill="#114f6e"/>
<g filter="url(#b1)">
<rect x="984" y="822" width="36" height="38" fill="#66786c"/><ellipse cx="1002" cy="842" rx="12" ry="14" fill="#b98f76"/>
<rect x="1026" y="822" width="36" height="38" fill="#4b3125"/><ellipse cx="1045" cy="842" rx="12" ry="14" fill="#b76f44"/>
<rect x="1071" y="822" width="36" height="38" fill="#141c20"/><ellipse cx="1089" cy="842" rx="10" ry="13" fill="#8d7262"/>
<rect x="984" y="865" width="35" height="35" fill="#3f2a20"/><ellipse cx="1003" cy="885" rx="12" ry="14" fill="#c59a6a"/><path d="M990 875h25v-8h-25z" fill="#c4a256"/>
<rect x="1026" y="865" width="36" height="35" fill="#1d2030"/><ellipse cx="1045" cy="885" rx="11" ry="14" fill="#7f6f8a"/>
<rect x="1071" y="865" width="36" height="35" fill="#3e3213"/><ellipse cx="1089" cy="885" rx="11" ry="14" fill="#9c7b45"/>
</g>
<rect x="1113" y="840" width="71" height="1" fill="#a5bcc9"/><rect x="1113" y="882" width="71" height="1" fill="#a5bcc9"/>
</g>

<!-- sidebar -->
<g clip-path="url(#s1)"><rect x="1384" y="660" width="40" height="40" fill="#7f8f52"/><g filter="url(#b1)"><ellipse cx="1395" cy="686" rx="8" ry="12" fill="#d8a781"/><ellipse cx="1413" cy="684" rx="11" ry="16" fill="#c8906f"/><rect x="1389" y="694" width="12" height="6" fill="#3bb6a0"/><path d="M1406 665h14v7h-14zM1388 668h12v5h-12z" fill="#57422c"/></g></g>
<circle cx="1404" cy="732" r="20" fill="#050505"/><rect x="1394" y="722" width="20" height="15" rx="3" fill="none" stroke="#3d3d3d"/>
<circle cx="1418" cy="746" r="5.500" fill="#dbe2ea"/><circle cx="1418" cy="746" r="3.500" fill="#4bb34b"/>
<g clip-path="url(#s3)"><rect x="1384" y="764" width="40" height="40" fill="#404f3a"/><rect x="1384" y="764" width="40" height="8" fill="#c8bdb0"/><rect x="1401" y="778" width="8" height="12" fill="#ece8e2"/><rect x="1400" y="788" width="10" height="16" fill="#d92a38"/><circle cx="1405" cy="773" r="4" fill="#c9a080"/></g>
<g clip-path="url(#s4)"><rect x="1384" y="816" width="40" height="40" fill="#9aa3ae"/><g filter="url(#b1)"><rect x="1384" y="840" width="40" height="16" fill="#8a8a8a"/><path d="M1385 826l12-5 5 22-6 13h-12z" fill="#3c3c70"/></g></g>
<circle cx="1416.500" cy="878" r="2.500" fill="#8fa4bc"/><path d="M1411.500 886c0-5 10-5 10 0z" fill="#8fa4bc"/>

<!-- post icons -->
<g fill="#c5d3e2">
<path d="M927 133l-5-5c-2-3 2-6 5-3 3-3 7 0 5 3z"/>
<path d="M927 221l-5-5c-2-3 2-6 5-3 3-3 7 0 5 3z"/>
<path d="M917 309l-5-5c-2-3 2-6 5-3 3-3 7 0 5 3z"/>
<path d="M927 825l-5-5c-2-3 2-6 5-3 3-3 7 0 5 3z"/>
<path d="M903 342l7-7 2 2-7 7-3 1z"/>
</g>
<path d="M923 334l9 9M932 334l-9 9" stroke="#b0c2d6" stroke-width="1.500"/>
</svg>

<!-- dividers -->
<div class="hr" style="left:468px;top:145px;width:466px"></div>
<div class="hr" style="left:468px;top:233px;width:466px"></div>
<div class="hr" style="left:468px;top:321px;width:466px"></div>
<div class="hr" style="left:404px;top:837px;width:550px"></div>
<div class="hr" style="left:969px;top:626px;width:230px"></div>
<div class="hr" style="left:239px;top:421px;width:145px;background:#dfe1e5"></div>
<div class="hr" style="left:239px;top:663px;width:145px;background:#dfe1e5"></div>
<div class="hr" style="left:239px;top:890px;width:145px;background:#dfe1e5"></div>
<div class="a" style="left:468px;top:718px;width:464px;height:80px;border:1px solid #e3e5e9;z-index:2"></div>
<div class="a" style="left:617px;top:719px;width:1px;height:80px;background:#e3e5e9;z-index:2"></div>

<!-- 18+ -->
<div class="t" style="left:358px;top:256px;font-size:10px;font-weight:bold;color:#fff;letter-spacing:0">18+</div>
<div class="t" style="left:358px;top:498px;font-size:10px;font-weight:bold;color:#fff;letter-spacing:0">18+</div>
<div class="t" style="left:358px;top:740px;font-size:10px;font-weight:bold;color:#fff;letter-spacing:0">18+</div>

<!-- Ads text -->
<div class="t b" style="left:239px;top:284px;letter-spacing:-.2px">Вещи в Dota 2</div>
<div class="t b" style="left:239px;top:299px;letter-spacing:.05px">за копейки</div>
<div class="t g ab" style="left:239px;top:315px;color:#828a99">tastydrop.ru</div>
<div class="t ab" style="left:239px;top:333px;letter-spacing:.2px">Тысячи игроков уже</div>
<div class="t ab" style="left:239px;top:348px">здесь. Десятки</div>
<div class="t ab" style="left:239px;top:363px;letter-spacing:0">сундуков с редким</div>
<div class="t ab" style="left:239px;top:378px">инвентарем. Рай</div>
<div class="t ab" style="left:239px;top:393px">для дотера!</div>

<div class="t b" style="left:239px;top:526px;letter-spacing:.07px">Запуск Interlude-</div>
<div class="t b" style="left:239px;top:541px;letter-spacing:-.4px">Online GVE</div>
<div class="t g ab" style="left:239px;top:557px;color:#828a99;letter-spacing:.25px">interlude-online.ru</div>
<div class="t ab" style="left:239px;top:575px">29 октября –</div>
<div class="t ab" style="left:239px;top:590px;letter-spacing:.25px">качественный проект,</div>
<div class="t ab" style="left:239px;top:605px">высокий онлайн,</div>
<div class="t ab" style="left:239px;top:620px">регулярные</div>
<div class="t ab" style="left:239px;top:635px">обновления!</div>

<div class="t b" style="left:239px;top:768px;letter-spacing:-.14px">Играй в Российскую</div>
<div class="t b" style="left:239px;top:783px;letter-spacing:-.15px">MMORPG!</div>
<div class="t g ab" style="left:239px;top:799px;color:#828a99">sphere3.gamexp.ru</div>
<div class="t ab" style="left:239px;top:817px">Легенда вернулась.</div>
<div class="t ab" style="left:239px;top:832px">Бесплатная игра от</div>
<div class="t ab" style="left:239px;top:847px">отечественного</div>
<div class="t ab" style="left:239px;top:862px">разработчика.</div>

<!-- Comments -->
<div class="t g" style="left:468px;top:120px;letter-spacing:.16px">сегодня в 1:33</div><div class="t l" style="left:564px;top:120px">Ответить</div>

<div class="t n" style="left:468px;top:155px">Константин Евдокимов</div><div class="t g" style="left:618px;top:155px;letter-spacing:.1px">ответил Clemen</div>
<div class="t" style="left:468px;top:173px;letter-spacing:.38px">Clemen, после 7 ноября у них будет 6 недель (вторников) до 25</div>
<div class="t" style="left:468px;top:190px;letter-spacing:.34px">декабря.осталось еще 4 эп.3 бетмена и 1 майна....лол)</div>
<div class="t g" style="left:468px;top:208px;letter-spacing:.16px">сегодня в 1:55</div><div class="t l" style="left:564px;top:208px">Ответить</div>

<div class="t n" style="left:468px;top:243px">Алексей Полещук</div>
<div class="t" style="left:468px;top:261px;letter-spacing:.425px">Ничего сверхкрутого я не увидел, лишь только больше контраста и</div>
<div class="t" style="left:468px;top:278px;letter-spacing:.42px">яркости вот и всё, но картинка стала поприятнее, теплее)0</div>
<div class="t g" style="left:468px;top:296px;letter-spacing:.16px">сегодня в 2:10</div><div class="t l" style="left:564px;top:296px">Ответить</div>
<div class="t" style="left:927px;top:296px;font-weight:bold;color:#5181b8">1</div>

<div class="t n" style="left:468px;top:331px">Кирилл Лазарев</div>
<div class="t l" style="left:468px;top:349px;letter-spacing:.28px">#РПГ2017 #RPG2017 #новыйсервер2017 #newserver2017</div>
<div class="t l" style="left:468px;top:366px;letter-spacing:.37px">#ИдунановыйсерверРПГ #МируМИР #RPGonelove #люблюРПГшечку</div>
<div class="t l" style="left:468px;top:383px">#толькоРПГтолькоПТС</div>
<div class="t" style="left:468px;top:400px;letter-spacing:.2px">ХОЧЕШЬ МИРА - ГОТОВЬСЯ К ВОЙНЕ!</div>
<div class="t" style="left:468px;top:417px;letter-spacing:.21px">МИР [x7] PTS High Five! БЕЗ ДОНАТА!</div>
<div class="t" style="left:468px;top:434px;letter-spacing:.33px">Официальное открытие 20 ноября 2017!</div>
<div class="t l" style="left:468px;top:451px;letter-spacing:.54px">http://rpg-club.org/ns2017hfcontestpr1</div>
<div class="t" style="left:468px;top:485px">Улови ухом эльфа сигнал к наступлению</div>
<div class="t" style="left:468px;top:502px;letter-spacing:.47px">Вот она точка кипения всё решит одно мгновение</div>
<div class="t" style="left:468px;top:519px;letter-spacing:.49px">У каждого сила с рождения и каждый здесь опасен</div>
<div class="t" style="left:468px;top:536px;letter-spacing:.47px">Учуй опасность и сохрани статус при власти</div>
<div class="t l" style="left:468px;top:553px;letter-spacing:.35px">http://upload.rpg-club.com/upload_image/h3_party_1710..</div>

<!-- banner text -->
<div class="t" style="left:540px;top:584px;font-size:36px;line-height:30px;font-weight:bold;color:#f2f0ee;letter-spacing:0">МИР</div>
<div class="t" style="left:623px;top:584px;font-size:31px;line-height:30px;font-weight:bold;color:#f5b50f;letter-spacing:0;transform:scaleX(.78);transform-origin:0 0">[x7]</div>
<div class="t" style="left:540px;top:612px;font-size:21px;line-height:24px;font-weight:bold;color:#f6c313;letter-spacing:0;transform:scaleX(.68);transform-origin:0 0">HIGH FIVE</div>
<div class="t" style="left:617px;top:616px;font-size:6px;line-height:8px;font-weight:bold;color:#f3e6c8;letter-spacing:0">ОФИЦИАЛЬНАЯ<br>ПЛАТФОРМА</div>
<div class="t" style="left:543px;top:638px;font-size:26px;line-height:28px;font-weight:bold;color:#3c0505;letter-spacing:0;transform:scaleX(.72);transform-origin:0 0">БЕЗ ДОНАТА</div>
<div class="t" style="left:673px;top:591px;font-size:13px;font-weight:bold;color:#f4e9d5;letter-spacing:-.1px">ОФИЦИАЛЬНОЕ ОТКРЫТИЕ</div>
<div class="t" style="left:679px;top:612px;font-size:26px;line-height:28px;font-weight:bold;color:#f8c414;letter-spacing:0;transform:scaleX(.78);transform-origin:0 0">20 НОЯБРЯ 2017</div>
<div class="t" style="left:711px;top:640px;font-size:26px;line-height:28px;font-weight:bold;color:#f8c414;letter-spacing:0;transform:scaleX(.82);transform-origin:0 0">20:00 Мск</div>
<div class="t" style="left:474px;top:670px;font-size:28px;line-height:28px;font-weight:bold;color:#f8c414;letter-spacing:0;transform:scaleX(.72);transform-origin:0 0">ХОЧЕШЬ МИРА - ГОТОВЬСЯ К ВОЙНЕ</div>

<div class="t b" style="left:633px;top:731px;letter-spacing:.09px">РПГ-Клуб Russia: Lineage 2. Лучшие</div>
<div class="t b" style="left:633px;top:748px;letter-spacing:-.03px">сервера Gracia Final, Freya High Five и Go...</div>
<div class="t g" style="left:633px;top:768px">www.rpg-club.com</div>
<div class="t g" style="left:468px;top:812px;letter-spacing:.12px">две секунды назад</div><div class="t l" style="left:592px;top:812px">Ответить</div>
<div class="t g" style="left:468px;top:854px;letter-spacing:.47px">Написать комментарий...</div>

<!-- Right column -->
<div class="t l" style="left:995px;top:119px;letter-spacing:.1px">Дарья</div>
<div class="t l" style="left:1065px;top:119px;letter-spacing:.1px">Антон</div>
<div class="t l" style="left:1137px;top:119px;letter-spacing:.1px">Женя</div>
<div class="t l" style="left:981px;top:202px;letter-spacing:.1px">Станислав</div>
<div class="t l" style="left:1065px;top:202px;letter-spacing:.1px">Ирина</div>
<div class="t l" style="left:1134px;top:202px;letter-spacing:.1px">Мария</div>

<div class="t" style="left:984px;top:257px">Ссылки</div><div class="t g" style="left:1037px;top:257px;letter-spacing:.1px">25</div>
<div class="t l" style="left:1036px;top:293px;letter-spacing:.08px">Telltale Games | Твиттер</div>
<div class="t m" style="left:1036px;top:311px">twitter.com</div>
<div class="t l" style="left:1036px;top:345px;letter-spacing:0">The Walking Dead Game</div>
<div class="t l" style="left:1036px;top:361px;letter-spacing:.15px">&gt; Игра Ходячие</div>
<div class="t l" style="left:1036px;top:377px">Мертвецы</div>
<div class="t m" style="left:1036px;top:395px">Исключительно ваша</div>
<div class="t m" style="left:1036px;top:411px">любимая игра</div>
<div class="t l" style="left:1036px;top:443px">Tolma4 Team</div>
<div class="t m" style="left:1036px;top:461px">Наши самые близкие</div>
<div class="t m" style="left:1036px;top:477px">друзья</div>
<div class="t l" style="left:1036px;top:509px;letter-spacing:.1px">Правила</div>
<div class="t m" style="left:1036px;top:527px">Правила</div>
<div class="t l" style="left:1036px;top:561px;letter-spacing:.1px">Запись</div>
<div class="t m" style="left:1036px;top:579px">Проблемы с запуском A</div>
<div class="t m" style="left:1036px;top:595px">New Frontier?</div>

<div class="t" style="left:984px;top:639px;letter-spacing:.05px">Фотоальбомы</div><div class="t g" style="left:1075px;top:639px;letter-spacing:.1px">28</div>
<div class="t" style="left:996px;top:778px;color:#fff;font-weight:bold;letter-spacing:.1px">Telltale games -Cospl...</div>
<div class="t" style="left:1150px;top:778px;color:#fff;font-weight:bold;letter-spacing:.1px">241</div>
<div class="a" style="left:1110px;top:825px;width:74px;height:73px;overflow:hidden;z-index:3">
<div class="t" style="left:11px;top:4px;font-size:9px;color:#9db4c2;letter-spacing:0">НОЛАН НОРТ</div>
<div class="t" style="left:3px;top:15px;font-size:9px;color:#9db4c2;letter-spacing:0">АВГУСТ / НЭЙТАН</div>
<div class="t" style="left:8px;top:46px;font-size:9px;color:#9db4c2;letter-spacing:0">ТРОЙ БЭЙКЕР</div>
<div class="t" style="left:16px;top:57px;font-size:9px;color:#9db4c2;letter-spacing:0">РИС / СЭМ</div>
</div>
<div class="t" style="left:1387px;top:874px;font-size:11.500px;font-weight:bold;color:#8fa4bc;letter-spacing:.2px">100</div>
</body></html>
